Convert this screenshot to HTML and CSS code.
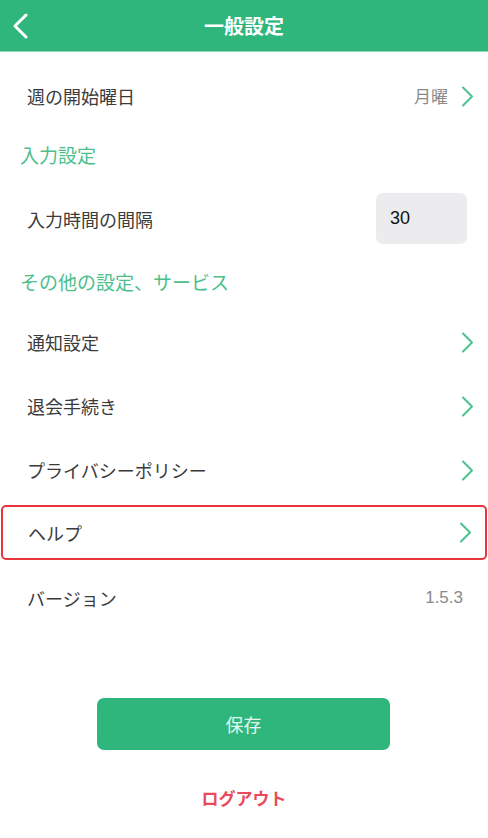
FILE: index.html
```html
<!DOCTYPE html>
<html lang="ja">
<head>
    <meta charset="UTF-8">
    <meta name="viewport" content="width=device-width, initial-scale=1.0">
    <title>一般設定</title>
    <link rel="stylesheet" href="styles.css">
</head>
<body>
    <header class="topbar">
        <a class="back" href="#">
            <svg width="16" height="26" viewBox="0 0 16 26"><path d="M14 2 L3 13 L14 24" fill="none" stroke="#fff" stroke-width="3" stroke-linecap="round" stroke-linejoin="round"/></svg>
        </a>
        <h1>一般設定</h1>
    </header>

    <main class="settings">
        <div class="row first">
            <span class="label">週の開始曜日</span>
            <span class="value">月曜</span>
            <svg class="chev" width="13" height="21" viewBox="0 0 13 21"><path d="M2 1.5 L11 10.5 L2 19.5" fill="none" stroke="#4cc08f" stroke-width="2" stroke-linecap="round" stroke-linejoin="round"/></svg>
        </div>

        <h2 class="section">入力設定</h2>
        <div class="row tall">
            <span class="label">入力時間の間隔</span>
            <input class="num" type="text" value="30">
        </div>

        <h2 class="section second">その他の設定、サービス</h2>
        <div class="row">
            <span class="label">通知設定</span>
            <svg class="chev" width="13" height="21" viewBox="0 0 13 21"><path d="M2 1.5 L11 10.5 L2 19.5" fill="none" stroke="#4cc08f" stroke-width="2" stroke-linecap="round" stroke-linejoin="round"/></svg>
        </div>
        <div class="row">
            <span class="label">退会手続き</span>
            <svg class="chev" width="13" height="21" viewBox="0 0 13 21"><path d="M2 1.5 L11 10.5 L2 19.5" fill="none" stroke="#4cc08f" stroke-width="2" stroke-linecap="round" stroke-linejoin="round"/></svg>
        </div>
        <div class="row">
            <span class="label">プライバシーポリシー</span>
            <svg class="chev" width="13" height="21" viewBox="0 0 13 21"><path d="M2 1.5 L11 10.5 L2 19.5" fill="none" stroke="#4cc08f" stroke-width="2" stroke-linecap="round" stroke-linejoin="round"/></svg>
        </div>
        <div class="row active">
            <span class="label">ヘルプ</span>
            <svg class="chev" width="13" height="21" viewBox="0 0 13 21"><path d="M2 1.5 L11 10.5 L2 19.5" fill="none" stroke="#4cc08f" stroke-width="2" stroke-linecap="round" stroke-linejoin="round"/></svg>
        </div>
        <div class="row">
            <span class="label">バージョン</span>
            <span class="value version">1.5.3</span>
        </div>
    </main>

    <div class="actions">
        <button class="save" type="button">保存</button>
        <a class="logout" href="#">ログアウト</a>
    </div>
</body>
</html>
```

FILE: styles.css
```css
body {
    margin: 0;
    font-family: "Noto Sans CJK JP", "Noto Sans", sans-serif;
    background: #fff;
    color: #333;
    width: 488px;
}
.topbar {
    height: 52px;
    background: #2eb67d;
    border-bottom: 1px solid #8fd6b4;
    box-sizing: border-box;
    display: flex;
    align-items: center;
    justify-content: center;
    position: relative;
}
.topbar h1 {
    margin: 0;
    font-size: 20px;
    font-weight: bold;
    color: #fff;
    line-height: 24px;
}
.back {
    position: absolute;
    left: 12px;
    top: 13px;
    display: block;
    height: 26px;
}
.settings {
    padding-top: 12px;
}
.row {
    height: 64px;
    display: flex;
    align-items: center;
    padding: 0 14px 0 27px;
    box-sizing: border-box;
}
.row .label {
    flex: 1;
    font-size: 18px;
    line-height: 24px;
    color: #3b3b3b;
}
.row .value {
    font-size: 17px;
    color: #8a8a8a;
    line-height: 24px;
    margin-right: 13px;
}
.row .version {
    font-family: "Liberation Sans", Arial, sans-serif;
    margin-right: 11px;
}
.chev {
    display: block;
}
.section {
    margin: 0;
    height: 53px;
    display: flex;
    align-items: center;
    padding-left: 20px;
    font-size: 19px;
    font-weight: normal;
    color: #4cbf8d;
}
.section.second {
    height: 54px;
    padding-bottom: 4px;
    box-sizing: border-box;
}
.row.tall {
    height: 75px;
    padding-right: 21px;
}
.num {
    width: 91px;
    height: 51px;
    box-sizing: border-box;
    border: none;
    border-radius: 7px;
    background: #ececee;
    padding: 0 14px;
    font-family: "Liberation Sans", Arial, sans-serif;
    font-size: 18px;
    color: #111;
    outline: none;
}
.row.active {
    height: 55px;
    margin: 3px 1px 6px;
    padding-left: 25px;
    padding-right: 13px;
    border: 2px solid #e8353c;
    border-radius: 5px;
}
.actions {
    display: flex;
    flex-direction: column;
    align-items: center;
    padding-top: 68px;
}
.save {
    width: 293px;
    height: 52px;
    margin-left: -1px;
    border: none;
    border-radius: 7px;
    background: #2eb67d;
    color: #e3f6ec;
    font-family: "Noto Sans CJK JP", sans-serif;
    font-size: 18px;
    cursor: pointer;
}
.logout {
    margin-top: 36px;
    font-size: 17px;
    font-weight: bold;
    color: #e94a5b;
    text-decoration: none;
    line-height: 24px;
}
```
